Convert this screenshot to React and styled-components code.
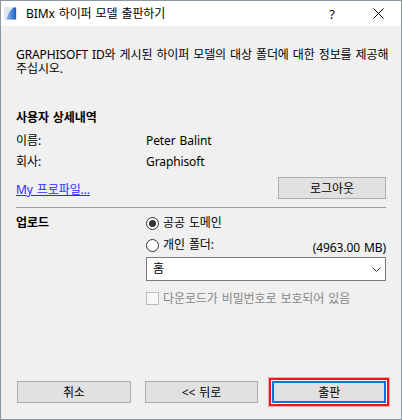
import React from "react";
import styled, { createGlobalStyle } from "styled-components";

const Global = createGlobalStyle`
  html, body { margin: 0; padding: 0; background: #f0f0f0; }
  * { box-sizing: border-box; }
`;

const font = `"Noto Sans", "Noto Sans CJK KR", sans-serif`;

const Window = styled.div`
  width: 402px;
  height: 420px;
  border: 1px solid #8a97a5;
  display: flex;
  flex-direction: column;
  font-family: ${font};
  font-size: 12px;
  line-height: 14px;
  letter-spacing: -0.1px;
  word-spacing: 1px;
  color: #000;
  background: #f0f0f0;
`;

const TitleBar = styled.div`
  height: 25px;
  background: #fff;
  display: flex;
  align-items: center;
  padding-left: 3px;
  flex-shrink: 0;
`;

const TitleText = styled.span`
  margin-left: 9px;
  font-size: 12px;
  flex: 1;
`;

const TitleButton = styled.div`
  width: ${(p) => p.$w}px;
  height: 25px;
  display: flex;
  align-items: center;
  justify-content: center;
  font-size: 13px;
`;

const Body = styled.div`
  flex: 1;
  display: flex;
  flex-direction: column;
  padding: 0 15px 16px 15px;
`;

const Intro = styled.p`
  margin: 22px 0 0 0;
  white-space: nowrap;
`;

const Heading = styled.div`
  font-weight: 700;
  margin-top: ${(p) => p.$mt}px;
`;

const InfoRow = styled.div`
  display: grid;
  grid-template-columns: 130px 1fr;
  margin-top: ${(p) => p.$mt}px;
`;

const LinkRow = styled.div`
  display: flex;
  justify-content: space-between;
  align-items: center;
  height: 22px;
  margin-top: 8px;
`;

const Link = styled.a`
  color: #2b2bff;
  text-decoration: underline;
  margin-top: 4px;
  cursor: pointer;
`;

const Button = styled.button`
  width: ${(p) => p.$w || 114}px;
  height: 22px;
  background: #e1e1e1;
  border: 1px solid #adadad;
  font-family: ${font};
  font-size: 12px;
  letter-spacing: -0.1px;
  word-spacing: 1px;
  color: #000;
  padding: 0;
  ${(p) =>
    p.$primary &&
    `
    border: 2px solid #0078d7;
    box-shadow: 0 0 0 1px #fff, 0 0 0 3px #f2131f, 0 0 0 4px rgba(255, 80, 90, 0.45);
  `}
`;

const Separator = styled.hr`
  border: 0;
  height: 1px;
  background: #a0a0a0;
  margin: ${(p) => p.$mt}px 0 0 0;
  ${(p) => p.$auto && `margin-top: auto;`}
`;

const UploadGrid = styled.div`
  display: grid;
  grid-template-columns: 130px 1fr;
  margin-top: 7px;
`;

const UploadLabel = styled.div`
  font-weight: 700;
  padding-top: 1px;
`;

const Options = styled.div`
  display: flex;
  flex-direction: column;
`;

const OptionRow = styled.div`
  display: flex;
  align-items: center;
  justify-content: space-between;
  height: 16px;
  margin-top: ${(p) => p.$mt || 0}px;
`;

const OptionLabel = styled.label`
  display: flex;
  align-items: center;
  gap: 4px;
  color: ${(p) => (p.$disabled ? "#858585" : "#000")};
`;

const Radio = styled.span`
  width: 13px;
  height: 13px;
  border-radius: 50%;
  border: 1px solid #333;
  background: #fff;
  display: flex;
  align-items: center;
  justify-content: center;
  &::after {
    content: "";
    width: 7px;
    height: 7px;
    border-radius: 50%;
    background: ${(p) => (p.$checked ? "#333" : "transparent")};
  }
`;

const Checkbox = styled.span`
  width: 13px;
  height: 13px;
  border: 1px solid #bcbcbc;
  background: #f7f7f7;
`;

const Size = styled.span`
  margin-bottom: -5px;
`;

const Select = styled.div`
  height: 24px;
  margin-top: 4px;
  background: #fff;
  border: 1px solid #7a7a7a;
  display: flex;
  align-items: center;
  justify-content: space-between;
  padding: 0 4px 0 6px;
`;

const CheckRow = styled.div`
  margin-top: 11px;
  height: 13px;
  display: flex;
  align-items: center;
`;

const Footer = styled.div`
  display: flex;
  gap: 14px;
  padding-left: 1px;
  margin-top: 17px;
`;

const AppIcon = () => (
  <svg width="13" height="13" viewBox="0 0 13 13">
    <defs>
      <linearGradient id="sail" x1="0" y1="0" x2="1" y2="0">
        <stop offset="0" stopColor="#8fb8ea" />
        <stop offset="1" stopColor="#1a5fc4" />
      </linearGradient>
    </defs>
    <rect x="0" y="0" width="13" height="13" fill="#dfe8f3" />
    <path d="M12 0.5 L9.5 0.5 Q4 5 2.5 12.5 L12 12.5 Z" fill="url(#sail)" />
  </svg>
);

const CloseIcon = () => (
  <svg width="11" height="11" viewBox="0 0 11 11">
    <path d="M0.5 0.5 L10.5 10.5 M10.5 0.5 L0.5 10.5" stroke="#000" strokeWidth="1" />
  </svg>
);

const Chevron = () => (
  <svg width="9" height="5" viewBox="0 0 9 5">
    <path d="M0.5 0.5 L4.5 4.5 L8.5 0.5" stroke="#333" strokeWidth="1" fill="none" />
  </svg>
);

export default function App() {
  return (
    <>
      <Global />
      <Window>
        <TitleBar>
          <AppIcon />
          <TitleText>BIMx 하이퍼 모델 출판하기</TitleText>
          <TitleButton $w={46}>?</TitleButton>
          <TitleButton $w={46}>
            <CloseIcon />
          </TitleButton>
        </TitleBar>
        <Body>
          <Intro>
            GRAPHISOFT ID와 게시된 하이퍼 모델의 대상 폴더에 대한 정보를 제공해
            <br />
            주십시오.
          </Intro>
          <Heading $mt={35}>사용자 상세내역</Heading>
          <InfoRow $mt={9}>
            <span>이름:</span>
            <span>Peter Balint</span>
          </InfoRow>
          <InfoRow $mt={7}>
            <span>회사:</span>
            <span>Graphisoft</span>
          </InfoRow>
          <LinkRow>
            <Link>My 프로파일...</Link>
            <Button $w={108}>로그아웃</Button>
          </LinkRow>
          <Separator $mt={8} />
          <UploadGrid>
            <UploadLabel>업로드</UploadLabel>
            <Options>
              <OptionRow>
                <OptionLabel>
                  <Radio $checked />
                  공공 도메인
                </OptionLabel>
              </OptionRow>
              <OptionRow $mt={6}>
                <OptionLabel>
                  <Radio />
                  개인 폴더:
                </OptionLabel>
                <Size>(4963.00 MB)</Size>
              </OptionRow>
              <Select>
                <span>홈</span>
                <Chevron />
              </Select>
              <CheckRow>
                <OptionLabel $disabled>
                  <Checkbox />
                  다운로드가 비밀번호로 보호되어 있음
                </OptionLabel>
              </CheckRow>
            </Options>
          </UploadGrid>
          <Separator $auto />
          <Footer>
            <Button>취소</Button>
            <Button>&lt;&lt; 뒤로</Button>
            <Button $primary>출판</Button>
          </Footer>
        </Body>
      </Window>
    </>
  );
}
